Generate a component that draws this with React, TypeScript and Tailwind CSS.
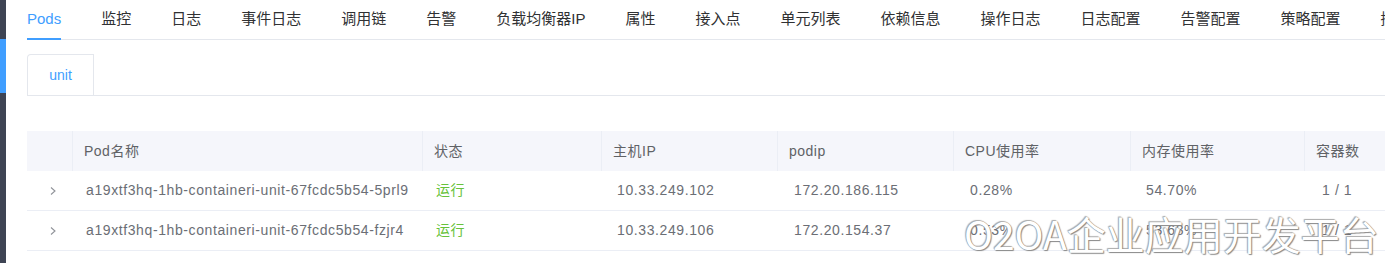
// Pod 列表页（标签栏 + 单元卡片 + Pod 表格）

import React from 'react';

const tabs = [
  'Pods',
  '监控',
  '日志',
  '事件日志',
  '调用链',
  '告警',
  '负载均衡器IP',
  '属性',
  '接入点',
  '单元列表',
  '依赖信息',
  '操作日志',
  '日志配置',
  '告警配置',
  '策略配置',
  '接口配置',
];

const columns = [
  { title: '', width: 'w-[46px]' },
  { title: 'Pod名称', width: 'w-[350px]' },
  { title: '状态', width: 'w-[179px]' },
  { title: '主机IP', width: 'w-[176px]' },
  { title: 'podip', width: 'w-[176px]' },
  { title: 'CPU使用率', width: 'w-[177px]' },
  { title: '内存使用率', width: 'w-[174px]' },
  { title: '容器数', width: 'w-[120px]' },
];

const pods = [
  {
    name: 'a19xtf3hq-1hb-containeri-unit-67fcdc5b54-5prl9',
    status: '运行',
    hostIp: '10.33.249.102',
    podIp: '172.20.186.115',
    cpu: '0.28%',
    mem: '54.70%',
    containers: '1 / 1',
  },
  {
    name: 'a19xtf3hq-1hb-containeri-unit-67fcdc5b54-fzjr4',
    status: '运行',
    hostIp: '10.33.249.106',
    podIp: '172.20.154.37',
    cpu: '0.53%',
    mem: '53.68%',
    containers: '1 / 1',
  },
];

const font = "font-['Liberation_Sans','Noto_Sans_CJK_SC',sans-serif]";

function Chevron() {
  return (
    <svg width="8" height="12" viewBox="0 0 8 12" fill="none">
      <path d="M2 2.5 L6 6 L2 9.5" stroke="#909399" strokeWidth="1.1" />
    </svg>
  );
}

export default function App() {
  return (
    <div className={`relative flex h-[263px] w-[1385px] overflow-hidden bg-white ${font}`}>
      {/* Sidebar edge */}
      <div className="flex w-[6px] shrink-0 flex-col bg-[#3e4454]">
        <div className="h-[39px]" />
        <div className="h-[54px] bg-[#409eff]" />
      </div>

      <div className="min-w-0 flex-1 pl-[21px]">
        {/* Tabs */}
        <div className="flex h-[40px] gap-10 whitespace-nowrap border-b border-[#e4e7ed] text-[15px] text-[#303133]">
          {tabs.map((tab, i) => (
            <div
              key={tab}
              className={
                i === 0
                  ? 'relative flex items-center text-[#409eff] after:absolute after:bottom-[-1px] after:left-0 after:h-[2px] after:w-full after:bg-[#409eff]'
                  : 'flex items-center'
              }
            >
              {tab}
            </div>
          ))}
        </div>

        {/* Card tab */}
        <div className="mt-[14px] flex h-[42px] border-b border-[#e4e7ed]">
          <div className="flex w-[67px] items-center justify-center rounded-tl-[4px] border border-b-0 border-[#e4e7ed] text-[14px] text-[#409eff]">
            unit
          </div>
        </div>

        {/* Table */}
        <div className="mt-[35px] w-max text-[14px] tracking-[0.6px]">
          <div className="flex h-[40px] bg-[#f5f6fb] tracking-[0.5px] text-[#606266]">
            {columns.map((col, i) => (
              <div
                key={i}
                className={`${col.width} flex items-center border-r border-[#ebeef5] pl-[11px]`}
              >
                {col.title}
              </div>
            ))}
          </div>
          {pods.map((pod) => (
            <div key={pod.name} className="flex h-[40px] border-b border-[#ebeef5] text-[#6b6e75]">
              <div className="flex w-[46px] items-center justify-center pl-[5px]">
                <Chevron />
              </div>
              <div className="flex w-[350px] items-center pl-[13px]">{pod.name}</div>
              <div className="flex w-[179px] items-center pl-[13px] text-[#67c23a]">{pod.status}</div>
              <div className="flex w-[176px] items-center pl-[15px]">{pod.hostIp}</div>
              <div className="flex w-[176px] items-center pl-[16px]">{pod.podIp}</div>
              <div className="flex w-[177px] items-center pl-[16px]">{pod.cpu}</div>
              <div className="flex w-[174px] items-center pl-[15px]">{pod.mem}</div>
              <div className="flex w-[120px] items-center pl-[17px]">{pod.containers}</div>
            </div>
          ))}
        </div>
      </div>

      {/* Watermark */}
      <div className="pointer-events-none absolute left-[964px] top-[206px] whitespace-nowrap font-['Noto_Sans_CJK_SC',sans-serif] text-[39px] leading-[54px] text-white [text-shadow:0_0_1px_#7a7a7a,1px_1px_1px_#8a8a8a,-1px_-1px_1px_#b0b0b0]">
        O2OA企业应用开发平台
      </div>
    </div>
  );
}
